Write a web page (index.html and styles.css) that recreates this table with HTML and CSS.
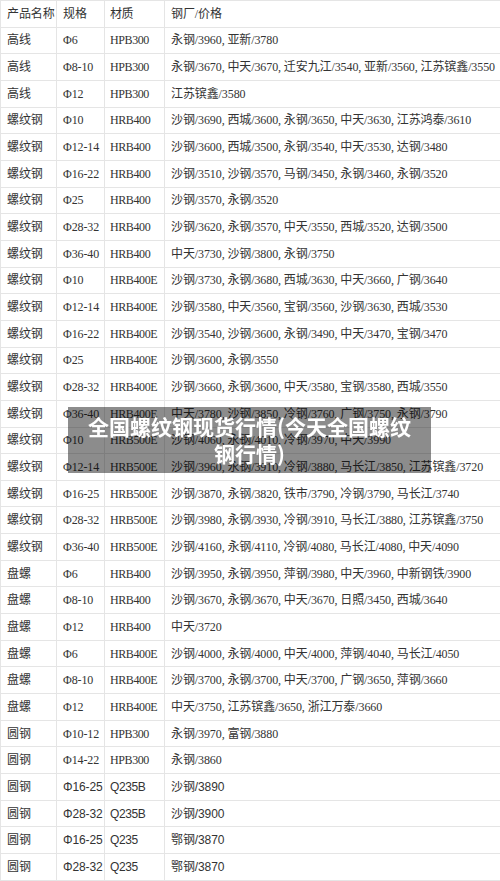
FILE: index.html
```html
<!DOCTYPE html>
<html lang="zh-CN">
<head>
<meta charset="utf-8">
<title>全国螺纹钢现货行情</title>
<link rel="stylesheet" href="styles.css">
</head>
<body>
<table class="price-table">
  <colgroup>
    <col class="c1"><col class="c2"><col class="c3"><col class="c4">
  </colgroup>
  <tbody>
    <tr><td>产品名称</td><td>规格</td><td class="grade">材质</td><td>钢厂/价格</td></tr>
    <tr><td>高线</td><td>Φ6</td><td class="grade">HPB300</td><td>永钢/3960, 亚新/3780</td></tr>
    <tr><td>高线</td><td>Φ8-10</td><td class="grade">HPB300</td><td>永钢/3670, 中天/3670, 迁安九江/3540, 亚新/3560, 江苏镔鑫/3550</td></tr>
    <tr><td>高线</td><td>Φ12</td><td class="grade">HPB300</td><td>江苏镔鑫/3580</td></tr>
    <tr><td>螺纹钢</td><td>Φ10</td><td class="grade">HRB400</td><td>沙钢/3690, 西城/3600, 永钢/3650, 中天/3630, 江苏鸿泰/3610</td></tr>
    <tr><td>螺纹钢</td><td>Φ12-14</td><td class="grade">HRB400</td><td>沙钢/3600, 西城/3500, 永钢/3540, 中天/3530, 达钢/3480</td></tr>
    <tr><td>螺纹钢</td><td>Φ16-22</td><td class="grade">HRB400</td><td>沙钢/3510, 沙钢/3570, 马钢/3450, 永钢/3460, 永钢/3520</td></tr>
    <tr><td>螺纹钢</td><td>Φ25</td><td class="grade">HRB400</td><td>沙钢/3570, 永钢/3520</td></tr>
    <tr><td>螺纹钢</td><td>Φ28-32</td><td class="grade">HRB400</td><td>沙钢/3620, 永钢/3570, 中天/3550, 西城/3520, 达钢/3500</td></tr>
    <tr><td>螺纹钢</td><td>Φ36-40</td><td class="grade">HRB400</td><td>中天/3730, 沙钢/3800, 永钢/3750</td></tr>
    <tr><td>螺纹钢</td><td>Φ10</td><td class="grade">HRB400E</td><td>沙钢/3730, 永钢/3680, 西城/3630, 中天/3660, 广钢/3640</td></tr>
    <tr><td>螺纹钢</td><td>Φ12-14</td><td class="grade">HRB400E</td><td>沙钢/3580, 中天/3560, 宝钢/3560, 沙钢/3630, 西城/3530</td></tr>
    <tr><td>螺纹钢</td><td>Φ16-22</td><td class="grade">HRB400E</td><td>沙钢/3540, 沙钢/3600, 永钢/3490, 中天/3470, 宝钢/3470</td></tr>
    <tr><td>螺纹钢</td><td>Φ25</td><td class="grade">HRB400E</td><td>沙钢/3600, 永钢/3550</td></tr>
    <tr><td>螺纹钢</td><td>Φ28-32</td><td class="grade">HRB400E</td><td>沙钢/3660, 永钢/3600, 中天/3580, 宝钢/3580, 西城/3550</td></tr>
    <tr><td>螺纹钢</td><td>Φ36-40</td><td class="grade">HRB400E</td><td>中天/3780, 沙钢/3850, 冷钢/3760, 广钢/3750, 永钢/3790</td></tr>
    <tr><td>螺纹钢</td><td>Φ10</td><td class="grade">HRB500E</td><td>沙钢/4060, 永钢/4010, 冷钢/3970, 中天/3990</td></tr>
    <tr><td>螺纹钢</td><td>Φ12-14</td><td class="grade">HRB500E</td><td>沙钢/3960, 永钢/3910, 冷钢/3880, 马长江/3850, 江苏镔鑫/3720</td></tr>
    <tr><td>螺纹钢</td><td>Φ16-25</td><td class="grade">HRB500E</td><td>沙钢/3870, 永钢/3820, 铁市/3790, 冷钢/3790, 马长江/3740</td></tr>
    <tr><td>螺纹钢</td><td>Φ28-32</td><td class="grade">HRB500E</td><td>沙钢/3980, 永钢/3930, 冷钢/3910, 马长江/3880, 江苏镔鑫/3750</td></tr>
    <tr><td>螺纹钢</td><td>Φ36-40</td><td class="grade">HRB500E</td><td>沙钢/4160, 永钢/4110, 冷钢/4080, 马长江/4080, 中天/4090</td></tr>
    <tr><td>盘螺</td><td>Φ6</td><td class="grade">HRB400</td><td>沙钢/3950, 永钢/3950, 萍钢/3980, 中天/3960, 中新钢铁/3900</td></tr>
    <tr><td>盘螺</td><td>Φ8-10</td><td class="grade">HRB400</td><td>沙钢/3670, 永钢/3670, 中天/3670, 日照/3450, 西城/3640</td></tr>
    <tr><td>盘螺</td><td>Φ12</td><td class="grade">HRB400</td><td>中天/3720</td></tr>
    <tr><td>盘螺</td><td>Φ6</td><td class="grade">HRB400E</td><td>沙钢/4000, 永钢/4000, 中天/4000, 萍钢/4040, 马长江/4050</td></tr>
    <tr><td>盘螺</td><td>Φ8-10</td><td class="grade">HRB400E</td><td>沙钢/3700, 永钢/3700, 中天/3700, 广钢/3650, 萍钢/3660</td></tr>
    <tr><td>盘螺</td><td>Φ12</td><td class="grade">HRB400E</td><td>中天/3750, 江苏镔鑫/3650, 浙江万泰/3660</td></tr>
    <tr><td>圆钢</td><td>Φ10-12</td><td class="grade">HPB300</td><td>永钢/3970, 富钢/3880</td></tr>
    <tr><td>圆钢</td><td>Φ14-22</td><td class="grade">HPB300</td><td>永钢/3860</td></tr>
    <tr class="sans"><td>圆钢</td><td>Φ16-25</td><td class="grade">Q235B</td><td>沙钢/3890</td></tr>
    <tr class="sans"><td>圆钢</td><td>Φ28-32</td><td class="grade">Q235B</td><td>沙钢/3900</td></tr>
    <tr class="sans"><td>圆钢</td><td>Φ16-25</td><td class="grade">Q235</td><td>鄂钢/3870</td></tr>
    <tr class="sans"><td>圆钢</td><td>Φ28-32</td><td class="grade">Q235</td><td>鄂钢/3870</td></tr>
  </tbody>
</table>
<div class="title-overlay">全国螺纹钢现货行情(今天全国螺纹钢行情)</div>
</body>
</html>
```

FILE: styles.css
```css
html, body {
  margin: 0;
  padding: 0;
  background: #ffffff;
}

body {
  font-family: "Liberation Serif", "Noto Sans CJK SC", serif;
  color: #333333;
}

.price-table {
  width: 500px;
  table-layout: fixed;
  border-collapse: collapse;
  font-size: 12px;
  letter-spacing: -0.1px;
}

.price-table .c1 { width: 56px; }
.price-table .c2 { width: 48px; }
.price-table .c3 { width: 60px; }
.price-table .c4 { width: 336px; }

.price-table td {
  height: 26.66px;
  box-sizing: border-box;
  padding: 0 0 0 6px;
  border: 1px solid #e5e5e5;
  white-space: nowrap;
  vertical-align: middle;
  line-height: 16px;
}

.price-table td.grade {
  padding-left: 5px;
  letter-spacing: -0.4px;
}

.price-table tr.sans td {
  font-family: "Liberation Sans", "Noto Sans CJK SC", sans-serif;
}

.title-overlay {
  position: fixed;
  left: 68px;
  top: 407px;
  width: 363px;
  box-sizing: border-box;
  padding: 6px 16px;
  background: rgba(0, 0, 0, 0.45);
  color: #ffffff;
  font-family: "Noto Sans CJK SC", sans-serif;
  font-weight: 700;
  font-size: 21px;
  line-height: 27px;
  text-align: center;
}
```
